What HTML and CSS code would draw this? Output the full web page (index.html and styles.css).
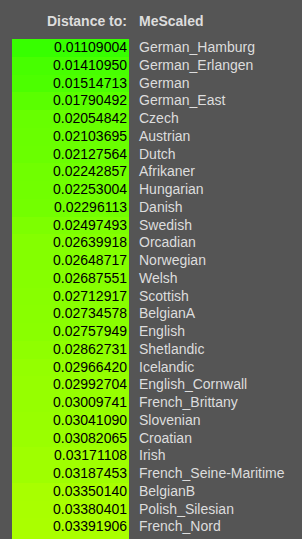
FILE: index.html
```html
<!DOCTYPE html>
<html>
<head>
<meta charset="utf-8">
<link rel="stylesheet" href="styles.css">
</head>
<body>
<div class="dist">
  <div class="head">
    <div class="hval">Distance to:</div>
    <div class="hname">MeScaled</div>
  </div>
  <div class="rows">
    <div class="row"><div class="val" style="background:rgb(55,255,0)">0.01109004</div><div class="name">German_Hamburg</div></div>
    <div class="row"><div class="val" style="background:rgb(71,255,0)">0.01410950</div><div class="name">German_Erlangen</div></div>
    <div class="row"><div class="val" style="background:rgb(76,255,0)">0.01514713</div><div class="name">German</div></div>
    <div class="row"><div class="val" style="background:rgb(90,255,0)">0.01790492</div><div class="name">German_East</div></div>
    <div class="row"><div class="val" style="background:rgb(103,255,0)">0.02054842</div><div class="name">Czech</div></div>
    <div class="row"><div class="val" style="background:rgb(105,255,0)">0.02103695</div><div class="name">Austrian</div></div>
    <div class="row"><div class="val" style="background:rgb(106,255,0)">0.02127564</div><div class="name">Dutch</div></div>
    <div class="row"><div class="val" style="background:rgb(112,255,0)">0.02242857</div><div class="name">Afrikaner</div></div>
    <div class="row"><div class="val" style="background:rgb(113,255,0)">0.02253004</div><div class="name">Hungarian</div></div>
    <div class="row"><div class="val" style="background:rgb(115,255,0)">0.02296113</div><div class="name">Danish</div></div>
    <div class="row"><div class="val" style="background:rgb(125,255,0)">0.02497493</div><div class="name">Swedish</div></div>
    <div class="row"><div class="val" style="background:rgb(132,255,0)">0.02639918</div><div class="name">Orcadian</div></div>
    <div class="row"><div class="val" style="background:rgb(132,255,0)">0.02648717</div><div class="name">Norwegian</div></div>
    <div class="row"><div class="val" style="background:rgb(134,255,0)">0.02687551</div><div class="name">Welsh</div></div>
    <div class="row"><div class="val" style="background:rgb(136,255,0)">0.02712917</div><div class="name">Scottish</div></div>
    <div class="row"><div class="val" style="background:rgb(137,255,0)">0.02734578</div><div class="name">BelgianA</div></div>
    <div class="row"><div class="val" style="background:rgb(138,255,0)">0.02757949</div><div class="name">English</div></div>
    <div class="row"><div class="val" style="background:rgb(143,255,0)">0.02862731</div><div class="name">Shetlandic</div></div>
    <div class="row"><div class="val" style="background:rgb(148,255,0)">0.02966420</div><div class="name">Icelandic</div></div>
    <div class="row"><div class="val" style="background:rgb(150,255,0)">0.02992704</div><div class="name">English_Cornwall</div></div>
    <div class="row"><div class="val" style="background:rgb(150,255,0)">0.03009741</div><div class="name">French_Brittany</div></div>
    <div class="row"><div class="val" style="background:rgb(152,255,0)">0.03041090</div><div class="name">Slovenian</div></div>
    <div class="row"><div class="val" style="background:rgb(154,255,0)">0.03082065</div><div class="name">Croatian</div></div>
    <div class="row"><div class="val" style="background:rgb(159,255,0)">0.03171108</div><div class="name">Irish</div></div>
    <div class="row"><div class="val" style="background:rgb(159,255,0)">0.03187453</div><div class="name">French_Seine-Maritime</div></div>
    <div class="row"><div class="val" style="background:rgb(168,255,0)">0.03350140</div><div class="name">BelgianB</div></div>
    <div class="row"><div class="val" style="background:rgb(169,255,0)">0.03380401</div><div class="name">Polish_Silesian</div></div>
    <div class="row"><div class="val" style="background:rgb(170,255,0)">0.03391906</div><div class="name">French_Nord</div></div>
  </div>
</div>
</body>
</html>
```
FILE: styles.css
```css
html, body {
  margin: 0;
  padding: 0;
  background: #555555;
}
body {
  font-family: "Liberation Sans", Arial, sans-serif;
  font-size: 14px;
  color: #dddddd;
}
.dist {
  padding: 13px 0 0 12px;
}
.head {
  display: flex;
  font-weight: bold;
  line-height: 16px;
  margin-bottom: 10px;
}
.hval {
  width: 117px;
  box-sizing: border-box;
  padding-right: 2px;
  text-align: right;
}
.hname {
  padding-left: 10px;
}
.rows {
  display: flex;
  flex-direction: column;
}
.row {
  display: flex;
  line-height: 17.75px;
}
.row:last-child .val {
  padding-bottom: 6px;
}
.val {
  width: 117px;
  box-sizing: border-box;
  padding-right: 2px;
  text-align: right;
  color: #000000;
}
.name {
  padding-left: 10px;
  white-space: nowrap;
}
```
